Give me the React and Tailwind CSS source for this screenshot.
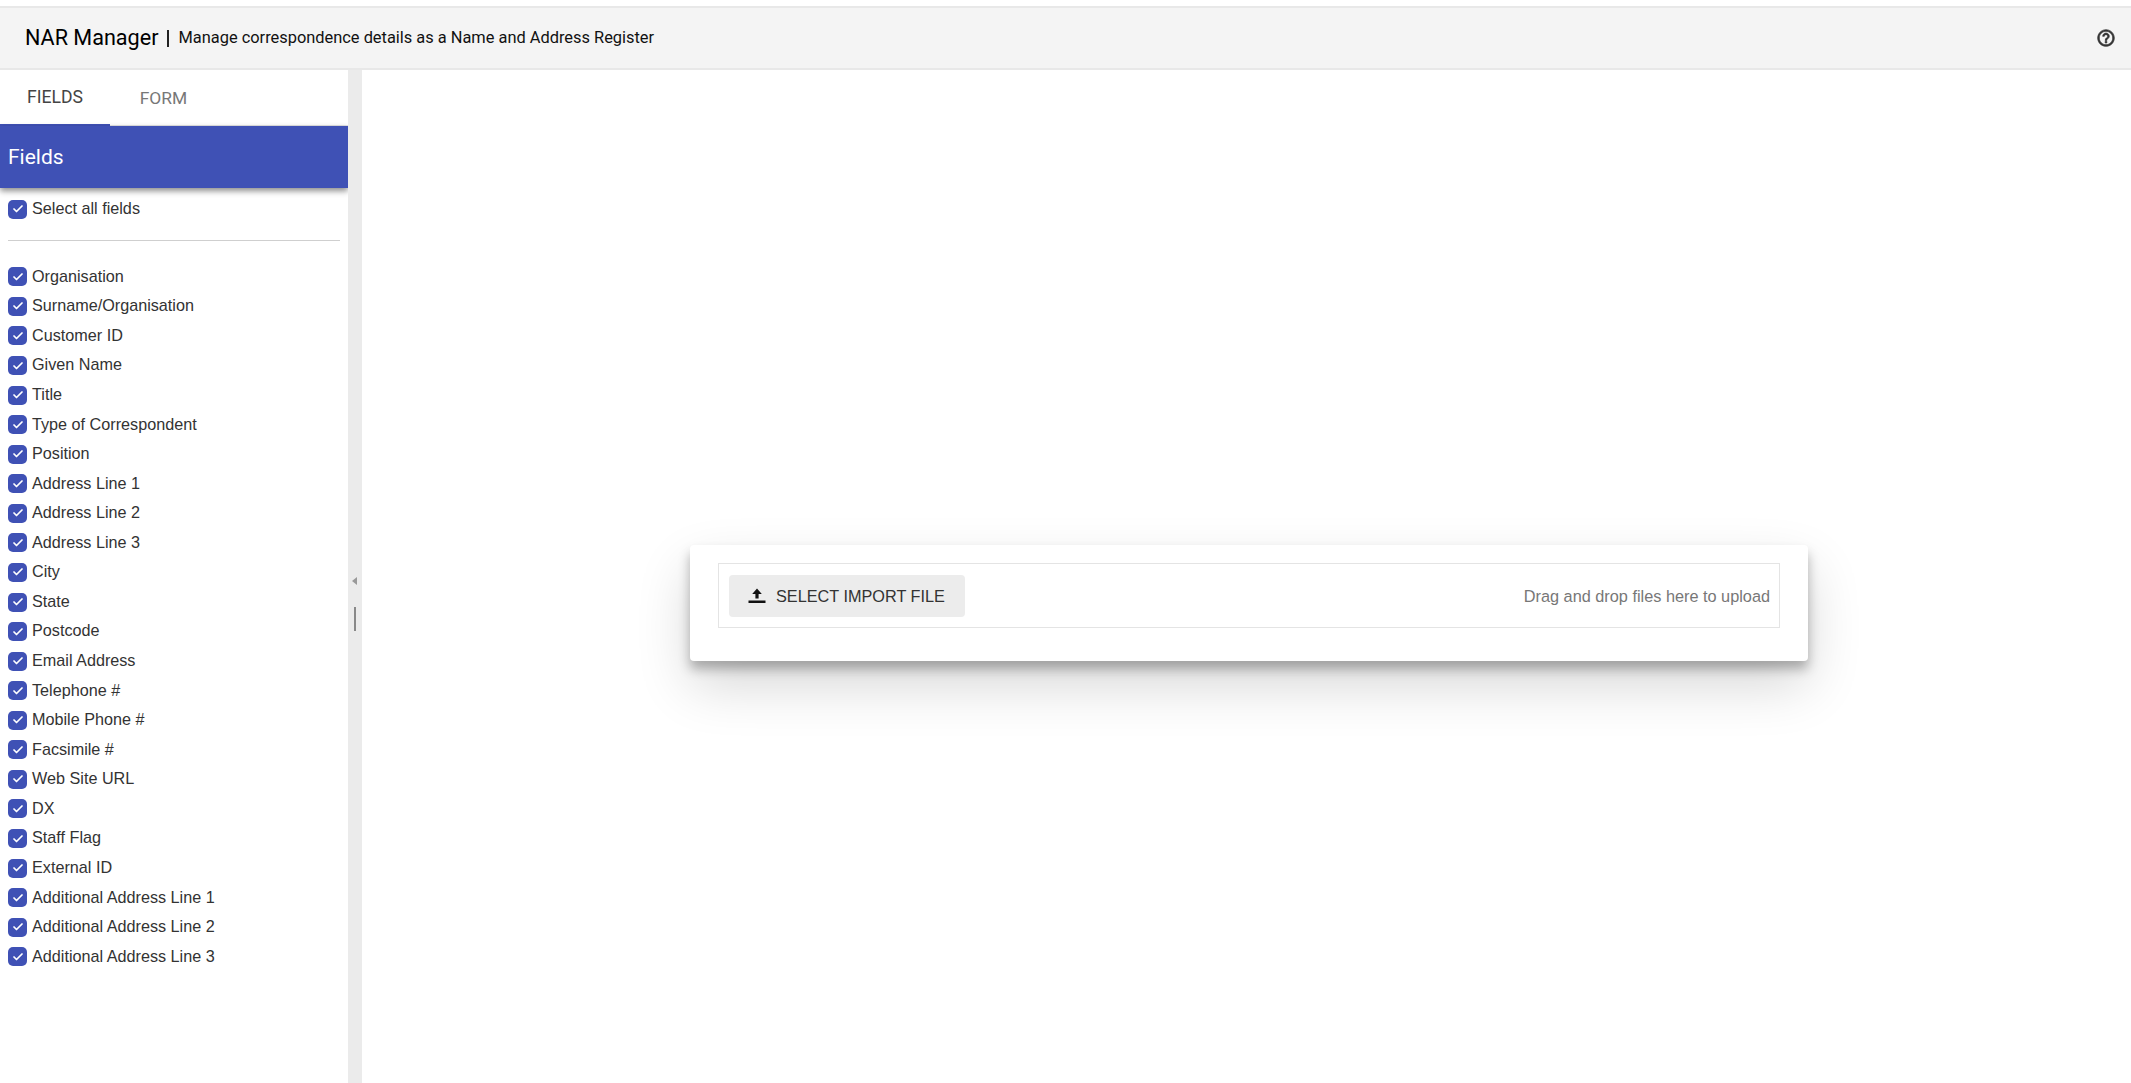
import { Check } from 'lucide-react';

const FIELDS = [
  'Organisation', 'Surname/Organisation', 'Customer ID', 'Given Name', 'Title', 'Type of Correspondent',
  'Position', 'Address Line 1', 'Address Line 2', 'Address Line 3', 'City', 'State', 'Postcode',
  'Email Address', 'Telephone #', 'Mobile Phone #', 'Facsimile #', 'Web Site URL', 'DX', 'Staff Flag',
  'External ID', 'Additional Address Line 1', 'Additional Address Line 2', 'Additional Address Line 3',
];

const FieldCheck = ({ label }) => (
  <div className="flex items-center h-[29.57px] pl-[8px] gap-[5px]">
    <span className="grid place-items-center w-[19px] h-[19px] mt-[1px] rounded-[5px] bg-[#3f51b5] shrink-0">
      <Check size={12} strokeWidth={3.5} className="text-white" />
    </span>
    <span className="text-[16.2px] text-[#333] -mt-[1px] whitespace-nowrap">{label}</span>
  </div>
);

export default function App() {
  return (
    <div className="h-[1083px] overflow-hidden bg-white flex flex-col font-['Liberation_Sans',Arial,sans-serif]">
      <div className="h-[6px] bg-white shrink-0" />
      {/* header */}
      <header className="h-[64px] shrink-0 flex items-center pl-[25px] pr-[15px] bg-[#f4f4f4] border-t-2 border-b-2 border-[#e8e8e8]">
        <span className="font-['Roboto',sans-serif] text-[21.6px] text-black">NAR Manager</span>
        <span className="ml-[8px] mr-[10px] w-[2px] h-[17px] bg-[#222]" />
        <span className="font-['Roboto',sans-serif] text-[16.4px] text-[#111] mt-[1px]">Manage correspondence details as a Name and Address Register</span>
        <svg className="ml-auto" width="20" height="20" viewBox="0 0 24 24" fill="#333">
          <path d="M11 18h2v-2h-2v2zm1-16C6.48 2 2 6.48 2 12s4.48 10 10 10 10-4.48 10-10S17.52 2 12 2zm0 18c-4.41 0-8-3.59-8-8s3.59-8 8-8 8 3.59 8 8-3.59 8-8 8zm0-14c-2.21 0-4 1.79-4 4h2c0-1.1.9-2 2-2s2 .9 2 2c0 2-3 1.75-3 5h2c0-2.25 3-2.5 3-5 0-2.21-1.79-4-4-4z" stroke="#333" strokeWidth="0.8" />
        </svg>
      </header>

      <div className="flex-1 flex min-h-0">
        {/* sidebar */}
        <aside className="w-[348px] shrink-0 flex flex-col">
          <div className="h-[56px] shrink-0 flex border-b border-[#e4e4e4]">
            <div className="w-[110px] h-[56px] grid place-items-center text-[17.6px] font-['Roboto',sans-serif] text-[#444] border-b-2 border-[#3f51b5]">FIELDS</div>
            <div className="w-[107px] h-[56px] grid place-items-center text-[17.4px] font-['Roboto',sans-serif] text-[#777]">FORM</div>
          </div>
          <div className="h-[62px] shrink-0 flex items-center pl-[8px] pt-[1px] bg-[#3f51b5] text-white text-[21px] font-['Roboto',sans-serif] shadow-[0_3px_6px_rgba(0,0,0,0.45)]">Fields</div>
          <div className="mt-[6px]">
            <FieldCheck label="Select all fields" />
          </div>
          <div className="mt-[16px] mx-[8px] mb-[21px] h-px bg-[#cfcfcf]" />
          {FIELDS.map((f) => <FieldCheck key={f} label={f} />)}
        </aside>

        {/* splitter */}
        <div className="relative w-[14px] shrink-0 bg-[#ebebeb]">
          <span className="absolute left-[4px] top-[507px] w-0 h-0 border-y-[4px] border-y-transparent border-r-[5px] border-r-[#999]" />
          <span className="absolute left-[6px] top-[537px] w-[2px] h-[24px] bg-[#888]" />
        </div>

        {/* main */}
        <main className="flex-1 pt-[475px] pl-[328px]">
          <div className="w-[1118px] h-[116px] bg-white rounded-[4px] pt-[18px] px-[28px] shadow-[0_8px_12px_rgba(0,0,0,0.28),0_24px_54px_rgba(0,0,0,0.16)]">
            <div className="h-[65px] border border-[#e4e4e4] flex items-center justify-between pl-[10px] pr-[9px]">
              <button className="w-[236px] h-[42px] flex items-center pl-[19px] gap-[10px] rounded-[4px] bg-[#ececec] text-[16.25px] text-[#333]">
                <svg width="18" height="18" viewBox="0 0 18 18" fill="#111">
                  <path d="M9 1.5 L13.8 7 H10.6 V11.5 H7.4 V7 H4.2 Z" />
                  <rect x="0.5" y="13.5" width="17" height="2.5" />
                </svg>
                <span className="mt-[1px]">SELECT IMPORT FILE</span>
              </button>
              <span className="text-[16.3px] text-[#777] mt-[1px]">Drag and drop files here to upload</span>
            </div>
          </div>
        </main>
      </div>
    </div>
  );
}
